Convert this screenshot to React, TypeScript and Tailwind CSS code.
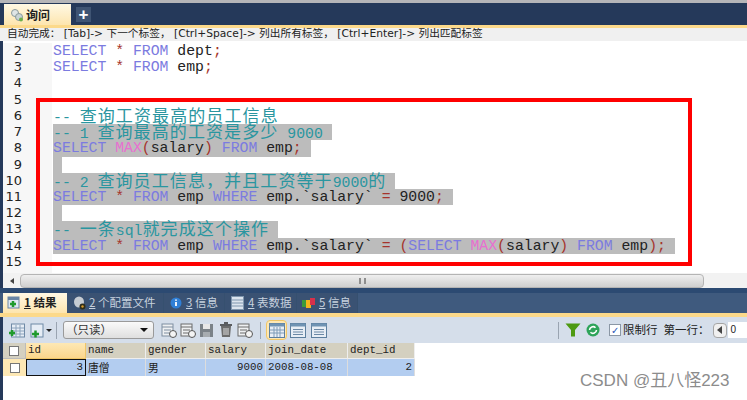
import type { ReactNode } from "react";

const mono = "font-['Liberation_Mono','Noto_Sans_CJK_SC',monospace]";

function Kw({ children }: { children: ReactNode }) {
  return <span className="text-[#7b7be0]">{children}</span>;
}
function Fn({ children }: { children: ReactNode }) {
  return <span className="text-[#e86fd0]">{children}</span>;
}
function Op({ children }: { children: ReactNode }) {
  return <span className="text-[#a5342c]">{children}</span>;
}
function Cn({ children }: { children: ReactNode }) {
  return (
    <span className="font-['Noto_Sans_CJK_SC',sans-serif] text-[17px] leading-none tracking-[1.1px]">
      {children}
    </span>
  );
}

function Line({ n, sel, tail, children }: { n: number; sel?: boolean; tail?: boolean; children?: ReactNode }) {
  return (
    <div className="flex h-[16.23px]">
      <div className="flex w-[49px] shrink-0 justify-end bg-[#f7f7f7] pr-[30px] font-['DejaVu_Sans',sans-serif] text-[13px] leading-[16.23px] text-[#222]">
        {n}
      </div>
      <div className={`flex h-full items-center whitespace-pre pl-px ${mono} text-[14.8px] leading-[16.23px] text-[#222]`}>
        <span className={sel ? "flex h-full items-center bg-[#bcbcbc]" : "flex h-full items-center"}>
          <span>
            {children}
            {tail ? "\u00a0" : ""}
          </span>
        </span>
      </div>
    </div>
  );
}

const comment = "text-[#2a96a0]";

function GridIcon({ active }: { active?: boolean }) {
  return (
    <div className={active ? "flex h-[20px] w-[21px] items-center justify-center rounded-sm border border-[#f0c667] bg-[#fde8b5]" : "flex h-[20px] w-[18px] items-center justify-center"}>
      <svg width="16" height="15" viewBox="0 0 16 15">
        <rect x="0.5" y="0.5" width="15" height="14" fill="#e8eef5" stroke="#5d7f9e" />
        <rect x="0.5" y="0.5" width="15" height="3" fill="#6f93b3" />
        {active ? (
          <path d="M1 7h14M1 10h14M5 4v10M8 4v10M11 4v10" stroke="#7f9cb8" />
        ) : (
          <path d="M3 6.5h10M3 9h10M3 11.5h10" stroke="#6a88a5" />
        )}
      </svg>
    </div>
  );
}

function Doc({ color = "#7e8ea0" }: { color?: string }) {
  return (
    <svg width="16" height="15" viewBox="0 0 16 15">
      <rect x="1" y="1" width="11" height="12" fill="#eef0f2" stroke={color} />
      <path d="M1 4h11M3 7h7M3 10h7" stroke={color} />
      <circle cx="12" cy="11" r="3.5" fill="#f4f4f4" stroke="#555" />
    </svg>
  );
}

export default function App() {
  return (
    <div className="relative flex h-[400px] w-[747px] flex-col overflow-hidden bg-white">
      {/* top tab strip */}
      <div className="h-[3px] bg-[#b5b5b8]" />
      <div className="flex h-[22px] items-end bg-[#25395a] pl-[4px]">
        <div className="flex h-[21px] w-[67px] items-center gap-[2px] bg-gradient-to-b from-[#fff8e4] to-[#fde5ae] pl-[6px]">
          <svg width="14" height="14" viewBox="0 0 14 14">
            <circle cx="5" cy="5" r="3.5" fill="#dfe5e6" stroke="#8b9a9c" />
            <circle cx="9" cy="9" r="3.5" fill="#c8d3d5" stroke="#8b9a9c" />
            <circle cx="11" cy="11.5" r="2" fill="#6caf4b" />
          </svg>
          <span className="font-['Noto_Sans_CJK_SC',sans-serif] text-[12px] font-bold leading-none text-[#222]">询问</span>
        </div>
        <div className="mb-[3px] ml-[5px] flex h-[15px] w-[15px] items-center justify-center bg-[#3f5473] font-['Liberation_Sans',sans-serif] text-[17px] font-bold leading-none text-white">
          +
        </div>
      </div>
      <div className="h-[3px] bg-[#fcd98a]" />
      {/* hint bar */}
      <div className="flex h-[13px] items-center whitespace-pre bg-[#f0f0f0] pl-[7px] font-['DejaVu_Sans','Noto_Sans_CJK_SC',sans-serif] text-[10.7px] leading-none text-[#222]">
        {"自动完成\uFF1A [Tab]-> 下一个标签\uFF0C [Ctrl+Space]-> 列出所有标签\uFF0C [Ctrl+Enter]-> 列出匹配标签"}
      </div>
      {/* editor */}
      <div className="flex h-[232px] flex-col border-l-[3px] border-[#25395a] pt-[2px]">
        <Line n={2}><Kw>SELECT</Kw> <Op>*</Op> <Kw>FROM</Kw> dept<Op>;</Op></Line>
        <Line n={3}><Kw>SELECT</Kw> <Op>*</Op> <Kw>FROM</Kw> emp<Op>;</Op></Line>
        <Line n={4} />
        <Line n={5} />
        <Line n={6}><span className={comment}>-- <Cn>查询工资最高的员工信息</Cn></span></Line>
        <Line n={7} sel tail><span className={comment}>-- 1 <Cn>查询最高的工资是多少</Cn> 9000</span></Line>
        <Line n={8} sel tail><Kw>SELECT</Kw> <Fn>MAX</Fn><Op>(</Op>salary<Op>)</Op> <Kw>FROM</Kw> emp<Op>;</Op></Line>
        <Line n={9} sel tail />
        <Line n={10} sel tail><span className={comment}>-- 2 <Cn>{"查询员工信息\uFF0C并且工资等于"}</Cn>9000<Cn>的</Cn></span></Line>
        <Line n={11} sel tail><Kw>SELECT</Kw> <Op>*</Op> <Kw>FROM</Kw> emp <Kw>WHERE</Kw> emp.`salary` <Op>=</Op> 9000<Op>;</Op></Line>
        <Line n={12} sel tail />
        <Line n={13} sel tail><span className={comment}>-- <Cn>一条</Cn>sql<Cn>就完成这个操作</Cn></span></Line>
        <Line n={14} sel tail><Kw>SELECT</Kw> <Op>*</Op> <Kw>FROM</Kw> emp <Kw>WHERE</Kw> emp.`salary` <Op>=</Op> <Op>(</Op><Kw>SELECT</Kw> <Fn>MAX</Fn><Op>(</Op>salary<Op>)</Op> <Kw>FROM</Kw> emp<Op>);</Op></Line>
        <Line n={15} />
        <div className="flex-1"><div className="h-full w-[49px] bg-[#f7f7f7]" /></div>
      </div>
      {/* horizontal scrollbar */}
      <div className="flex h-[15px] items-center border-l-[3px] border-[#25395a] bg-[#f2f2f2]">
        <div className="flex w-[17px] justify-center">
          <div className="h-0 w-0 border-y-[3px] border-r-[4px] border-y-transparent border-r-[#444]" />
        </div>
        <div className="flex h-[14px] w-[684px] items-center justify-center rounded-sm border border-[#b4b4b4] bg-gradient-to-b from-[#efefef] to-[#cfcfcf]">
          <div className="h-[6px] w-[7px] border-x-2 border-[#8e8e8e]" />
        </div>
      </div>
      <div className="h-[5px] bg-[#2c4a72]" />
      {/* result tabs */}
      <div className="flex h-[20px] items-stretch bg-[#3f5a7e] pl-[3px] font-['Noto_Sans_CJK_SC',sans-serif] text-[11.5px] leading-none">
        <div className="flex w-[64px] items-center gap-[3px] bg-gradient-to-b from-[#fff8e4] to-[#fde5ae] pl-[4px] font-bold text-[#222]">
          <svg width="14" height="14" viewBox="0 0 14 14">
            <rect x="1" y="1" width="11" height="11" fill="#dfe8f2" stroke="#6a86a5" />
            <rect x="1" y="1" width="11" height="3" fill="#6a86a5" />
            <path d="M3 8h6M6 5v6" stroke="#1f9a2d" strokeWidth="2.5" />
          </svg>
          <span><u>1</u> 结果</span>
        </div>
        <div className="flex w-[97px] items-center gap-[2px] border-r border-[#36506f] bg-[#3a5273] pl-[6px] text-[#c7d1de]">
          <svg width="14" height="14" viewBox="0 0 14 14">
            <ellipse cx="6" cy="6" rx="5" ry="5.5" fill="#c6ccd3" />
            <circle cx="9.5" cy="10.5" r="3" fill="#2d2d1c" />
            <circle cx="9.5" cy="10.5" r="1.2" fill="#d99b2b" />
          </svg>
          <span><u>2</u> 个配置文件</span>
        </div>
        <div className="flex w-[61px] items-center gap-[4px] border-r border-[#36506f] bg-[#3a5273] pl-[6px] text-[#c7d1de]">
          <svg width="12" height="12" viewBox="0 0 12 12">
            <circle cx="6" cy="6" r="5.5" fill="#2f7fd6" />
            <path d="M6 5v4M6 2.5v1.2" stroke="#fff" strokeWidth="1.8" />
          </svg>
          <span><u>3</u> 信息</span>
        </div>
        <div className="flex w-[72px] items-center gap-[4px] border-r border-[#36506f] bg-[#3a5273] pl-[6px] text-[#c7d1de]">
          <svg width="13" height="14" viewBox="0 0 13 14">
            <rect x="0.5" y="0.5" width="12" height="13" fill="#dbe4ee" stroke="#7f96ae" />
            <path d="M1 4h11M1 7h11M1 10h11" stroke="#7f96ae" />
          </svg>
          <span><u>4</u> 表数据</span>
        </div>
        <div className="flex w-[61px] items-center gap-[3px] border-r border-[#36506f] bg-[#3a5273] pl-[5px] text-[#c7d1de]">
          <svg width="14" height="12" viewBox="0 0 14 12">
            <rect x="0" y="3" width="5" height="7" fill="#3a9a3a" />
            <rect x="4" y="3" width="5" height="8" fill="#f2b51e" />
            <rect x="8" y="1" width="5" height="7" fill="#d8304a" />
          </svg>
          <span><u>5</u> 信息</span>
        </div>
      </div>
      <div className="h-[4px] bg-[#fcd98a]" />
      {/* result toolbar */}
      <div className="flex h-[26px] items-center border-l-[3px] border-[#25395a] bg-[#d5deea]">
        <div className="ml-[3px] flex w-[22px] justify-center">
          <svg width="16" height="15" viewBox="0 0 16 15">
            <rect x="2.5" y="1" width="13" height="13" fill="#e6edf5" stroke="#6f8aa6" />
            <path d="M3 5h12M3 8h12M3 11h12M7 2v12M11 2v12" stroke="#8aa2bb" />
            <path d="M0 10h6M3 7v6" stroke="#1f9a2d" strokeWidth="2.5" />
          </svg>
        </div>
        <div className="ml-[2px] flex w-[24px] items-center gap-[2px]">
          <svg width="14" height="15" viewBox="0 0 14 15">
            <rect x="1" y="1" width="12" height="13" fill="#e6edf5" stroke="#6f8aa6" />
            <path d="M2 11h7M5.5 7.5v7" stroke="#1f9a2d" strokeWidth="2.5" />
          </svg>
          <div className="h-0 w-0 border-x-[3px] border-t-[3px] border-x-transparent border-t-[#222]" />
        </div>
        <div className="ml-[2px] mr-[6px] h-[17px] w-px bg-[#9aa4b1]" />
        <div className="flex h-[18px] w-[91px] items-center justify-between rounded-[3px] border border-[#9a9a9a] bg-gradient-to-b from-[#fafafa] to-[#dfdfdf] pl-[2px] pr-[5px] font-['Noto_Sans_CJK_SC',sans-serif] text-[11.5px] leading-none text-[#333]">
          <span>{"\uFF08只读\uFF09"}</span>
          <div className="h-0 w-0 border-x-[4px] border-t-[4px] border-x-transparent border-t-[#111]" />
        </div>
        <div className="ml-[7px] flex items-center gap-[3px]">
          <Doc />
          <Doc color="#6b6b6b" />
          <svg width="16" height="15" viewBox="0 0 16 15">
            <path d="M1 1h13v13H1z" fill="#7b8288" />
            <rect x="4" y="1" width="7" height="5" fill="#e8e8e8" />
            <rect x="4" y="9" width="7" height="5" fill="#a7acb0" />
          </svg>
          <svg width="16" height="16" viewBox="0 0 16 16">
            <path d="M3 4h10l-1 11H4z" fill="#6c6c6c" />
            <path d="M2 3h12M6 1h4" stroke="#333" strokeWidth="1.5" />
            <path d="M6 6v7M8 6v7M10 6v7" stroke="#ddd" />
          </svg>
          <Doc color="#6b6b6b" />
        </div>
        <div className="ml-[7px] mr-[5px] h-[17px] w-px bg-[#9aa4b1]" />
        <GridIcon active />
        <div className="ml-[2px] flex gap-[3px]">
          <GridIcon />
          <GridIcon />
        </div>
        <div className="ml-[230px] h-[17px] w-px bg-[#9aa4b1]" />
        <svg className="ml-[6px]" width="16" height="14" viewBox="0 0 16 14">
          <path d="M0.5 0.5h15L10 7v6.5H6V7z" fill="#4e9a12" />
        </svg>
        <svg className="ml-[5px]" width="14" height="14" viewBox="0 0 14 14">
          <circle cx="7" cy="7" r="6.5" fill="#2ea45a" />
          <path d="M3.5 7a3.5 3.5 0 0 1 6-2.3M10.5 7a3.5 3.5 0 0 1-6 2.3" fill="none" stroke="#fff" strokeWidth="1.6" />
        </svg>
        <div className="ml-[9px] flex h-[12px] w-[12px] items-center justify-center border border-[#8b97a5] bg-white text-[10px] leading-none text-[#2a55b8]">
          ✓
        </div>
        <span className="ml-[2px] font-['Noto_Sans_CJK_SC',sans-serif] text-[11.5px] leading-none text-[#222]">限制行</span>
        <span className="ml-[6px] font-['Noto_Sans_CJK_SC',sans-serif] text-[11.5px] leading-none text-[#222]">{"第一行\uFF1A"}</span>
        <div className="ml-[3px] flex h-[15px] w-[14px] items-center justify-center rounded-sm border border-[#a5a5a5] bg-[#f0f0f0]">
          <div className="h-0 w-0 border-y-[4px] border-r-[5px] border-y-transparent border-r-[#444]" />
        </div>
        <div className="ml-px flex h-[16px] flex-1 items-center bg-white pl-[3px] font-['Liberation_Sans',sans-serif] text-[10px] leading-none text-[#222]">
          0
        </div>
      </div>
      {/* result grid */}
      <div className={`flex flex-1 flex-col border-l-[3px] border-[#25395a] ${mono} text-[10.8px] leading-none text-[#222]`}>
        <div className="grid h-[16px] w-fit grid-cols-[23px_60px_60px_60px_60px_82px_67px]">
          <div className="flex items-center justify-center border-r border-b border-[#bbb] bg-[#d4d0c0]">
            <div className="h-[10px] w-[10px] border border-[#777] bg-white" />
          </div>
          <div className="flex items-center border-r border-b border-[#f0c667] bg-gradient-to-b from-[#fde8b5] to-[#fbd68c] pl-[2px]">id</div>
          <div className="flex items-center border-r border-b border-[#eee] bg-[#d4d0c0] pl-[2px]">name</div>
          <div className="flex items-center border-r border-b border-[#eee] bg-[#d4d0c0] pl-[2px]">gender</div>
          <div className="flex items-center border-r border-b border-[#eee] bg-[#d4d0c0] pl-[2px]">salary</div>
          <div className="flex items-center border-r border-b border-[#eee] bg-[#d4d0c0] pl-[2px]">join_date</div>
          <div className="flex items-center border-r border-b border-[#eee] bg-[#d4d0c0] pl-[2px]">dept_id</div>
        </div>
        <div className="grid h-[17px] w-fit grid-cols-[23px_60px_60px_60px_60px_82px_67px]">
          <div className="flex items-center justify-center bg-[#fde8b5]">
            <div className="h-[10px] w-[10px] border border-[#777] bg-white" />
          </div>
          <div className="flex items-center justify-end border border-[#111] bg-[#b3cdf0] pr-[2px]">3</div>
          <div className="flex items-center border-r border-[#ddd] bg-[#b3cdf0] pl-[2px] font-['Noto_Sans_CJK_SC',sans-serif]">唐僧</div>
          <div className="flex items-center border-r border-[#ddd] bg-[#b3cdf0] pl-[2px] font-['Noto_Sans_CJK_SC',sans-serif]">男</div>
          <div className="flex items-center justify-end border-r border-[#ddd] bg-[#b3cdf0] pr-[2px]">9000</div>
          <div className="flex items-center border-r border-[#ddd] bg-[#b3cdf0] pl-[2px]">2008-08-08</div>
          <div className="flex items-center justify-end border-r border-[#ddd] bg-[#b3cdf0] pr-[2px]">2</div>
        </div>
      </div>
      {/* red highlight drawn over the editor */}
      <div className="absolute left-[36px] top-[98px] h-[168px] w-[656px] border-[4px] border-[#ff0000]" />
      <div className="absolute left-[580px] top-[370px] font-['Liberation_Sans','Noto_Sans_CJK_SC',sans-serif] text-[17px] leading-[22px] text-[#8c8c8c]">
        CSDN @丑八怪223
      </div>
    </div>
  );
}
